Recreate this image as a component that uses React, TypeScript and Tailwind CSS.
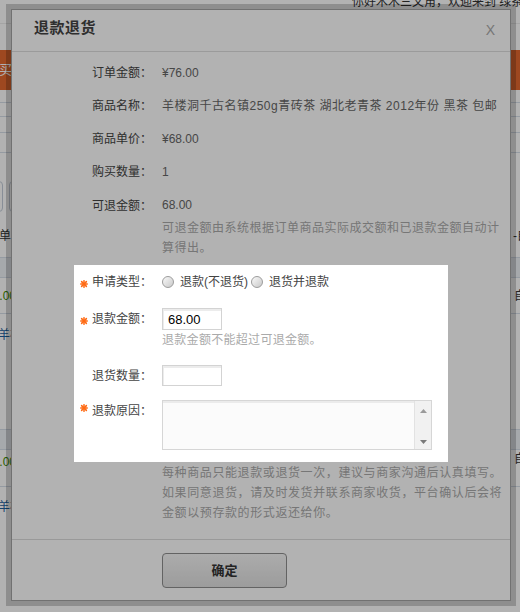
import type { ReactNode } from 'react';

// page that sits behind the dimmed dialog, only its edges show
function BackgroundPage() {
  const line = 'border-b border-[#d6dee8]';
  return (
    <div className="flex h-[612px] flex-col bg-white text-[12px] text-[#333]">
      <div className="h-[24px] border-b border-[#ececec]">
        <p className="-mt-[4px] whitespace-nowrap pl-[352px] leading-[12px]">你好木木三文角，欢迎来到 绿茶网</p>
      </div>
      <div className="h-[26px]" />
      <div className="flex h-[40px] items-center bg-[#e2672e] text-[13px] text-white">
        <span className="-ml-[1px]">买</span>
      </div>
      <div className={`h-[13px] ${line}`} />
      <div className={`h-[14px] ${line}`} />
      <div className={`h-[16px] ${line}`} />
      <div className={`h-[20px] ${line}`} />
      <div className={`flex h-[105px] flex-col ${line}`}>
        <div className="mt-[28px] flex h-[31px] gap-[6px]">
          <div className="-ml-[30px] w-[33px] rounded-[4px] border border-[#c3ccd8]" />
          <div className="w-[40px] rounded-[4px] border border-[#c3ccd8]" />
        </div>
        <div className="mt-[14px] flex leading-[20px]">
          <span className="-ml-[1px]">单阳</span>
          <span className="ml-auto w-[7px] overflow-hidden whitespace-nowrap">-自动</span>
        </div>
      </div>
      <div className={`h-[20px] bg-[#eef2f7] ${line}`} />
      <div className={`flex h-[36px] items-center ${line}`}>
        <span className="-ml-[14px] text-[#3c8c00]">76.00</span>
        <span className="ml-auto w-[6px] overflow-hidden whitespace-nowrap">自动</span>
      </div>
      <div className={`h-[116px] ${line}`}>
        <p className="mt-[11px] -ml-[2px] leading-[20px] text-[#1d5f9e]">羊楼</p>
      </div>
      <div className={`h-[20px] bg-[#eef2f7] ${line}`} />
      <div className={`flex h-[37px] items-start ${line}`}>
        <span className="mt-[3px] -ml-[14px] text-[#3c8c00]">76.00</span>
        <span className="ml-auto w-[6px] overflow-hidden whitespace-nowrap">自动</span>
      </div>
      <div>
        <p className="mt-[10px] -ml-[2px] leading-[20px] text-[#1d5f9e]">羊楼</p>
      </div>
    </div>
  );
}

function Star() {
  return (
    <svg width="8" height="8" viewBox="0 0 8 8" className="mt-[3px] shrink-0">
      <g stroke="#ff6a13" strokeWidth="1.5" strokeLinecap="round">
        <line x1="4" y1="0.7" x2="4" y2="7.3" />
        <line x1="0.7" y1="4" x2="7.3" y2="4" />
        <line x1="1.6" y1="1.6" x2="6.4" y2="6.4" />
        <line x1="6.4" y1="1.6" x2="1.6" y2="6.4" />
      </g>
    </svg>
  );
}

function Label({ text, required, top }: { text: string; required?: boolean; top?: boolean }) {
  return (
    <div className={`flex w-[78px] shrink-0 pl-[6px] ${top ? 'items-start pt-[1px]' : 'items-center'}`}>
      {required && <Star />}
      <span className="ml-auto whitespace-nowrap leading-[20px] text-[#444]">{text}</span>
    </div>
  );
}

function Row({ label, required, top, children }: { label: string; required?: boolean; top?: boolean; children: ReactNode }) {
  return (
    <div className={`flex ${top ? 'items-start' : 'items-center'}`}>
      <Label text={label} required={required} top={top} />
      <div className="ml-[10px] min-w-0 flex-1">{children}</div>
    </div>
  );
}

function Radio() {
  return (
    <span className="h-[12px] w-[12px] shrink-0 rounded-full border border-[#9c9c9c] bg-linear-to-br from-[#fafafa] to-[#c9c9c9]" />
  );
}

function RefundDialog() {
  return (
    <div className="absolute left-[6px] top-[4px] h-[602px] w-[510px] border-[5px] border-black/20">
      <div className="flex h-full flex-col border border-[#a3a3a3] bg-white">
        {/* header */}
        <div className="flex h-[42px] shrink-0 items-start justify-between border-b border-[#dedede] pl-[22px] pr-[15px] pt-[8px]">
          <h2 className="text-[15px] font-bold leading-[20px] tracking-[0.5px] text-[#444]">退款退货</h2>
          <span className="mt-[2px] text-[14px] leading-[20px] text-[#aaa]">X</span>
        </div>

        {/* body */}
        <div className="flex-1 pl-[62px] text-[12px]">
          <div className="flex flex-col gap-[13px] pt-[11px]">
            <Row label="订单金额：">
              <span className="leading-[20px] text-[#666]">¥76.00</span>
            </Row>
            <Row label="商品名称：">
              <span className="whitespace-nowrap leading-[20px] tracking-[0.5px] text-[#666]">羊楼洞千古名镇250g青砖茶 湖北老青茶 2012年份 黑茶 包邮</span>
            </Row>
            <Row label="商品单价：">
              <span className="leading-[20px] text-[#666]">¥68.00</span>
            </Row>
            <Row label="购买数量：">
              <span className="leading-[20px] text-[#666]">1</span>
            </Row>
            <Row label="可退金额：" top>
              <p className="leading-[20px] text-[#666]">68.00</p>
              <p className="mt-[3px] whitespace-nowrap leading-[20px] tracking-[0.5px] text-[#aaa]">
                可退金额由系统根据订单商品实际成交额和已退款金额自动计
                <br />
                算得出。
              </p>
            </Row>
          </div>

          {/* highlighted part, sits above the dim layer */}
          <div className="relative z-20 mt-[7px] w-[374px] bg-white pb-[12px] pt-[7px]">
            <Row label="申请类型：" required>
              <div className="flex h-[20px] items-center whitespace-nowrap text-[#444]">
                <Radio />
                <span className="ml-[6px]">退款(不退货)</span>
                <span className="ml-[3px]" />
                <Radio />
                <span className="ml-[6px]">退货并退款</span>
              </div>
            </Row>
            <div className="mt-[16px]">
              <Row label="退款金额：" required>
                <input
                  defaultValue="68.00"
                  className="h-[22px] w-[60px] border border-[#d3d3d3] bg-white px-[5px] text-[13px] text-black shadow-[inset_1px_2px_0_#ececec] outline-none"
                />
              </Row>
              <p className="ml-[88px] leading-[20px] tracking-[0.3px] text-[#aaa]">退款金额不能超过可退金额。</p>
            </div>
            <div className="mt-[15px]">
              <Row label="退货数量：">
                <input className="h-[21px] w-[60px] border border-[#d3d3d3] bg-white px-[5px] text-[13px] shadow-[inset_1px_2px_0_#ececec] outline-none" />
              </Row>
            </div>
            <div className="mt-[14px]">
              <Row label="退款原因：" required top>
                <div className="flex h-[50px] w-[270px] border border-[#d6d6d6] bg-[#fbfbfb] shadow-[inset_0_2px_0_#ebebeb]">
                  <div className="flex-1" />
                  <div className="flex w-[17px] flex-col items-center justify-between border-l border-[#e2e2e2] bg-[#f1f1f1] pb-[5px] pt-[8px]">
                    <svg width="7" height="4" viewBox="0 0 7 4">
                      <polygon points="3.5,0 7,4 0,4" fill="#9a9a9a" />
                    </svg>
                    <svg width="7" height="4" viewBox="0 0 7 4">
                      <polygon points="0,0 7,0 3.5,4" fill="#7a7a7a" />
                    </svg>
                  </div>
                </div>
              </Row>
            </div>
          </div>

          <p className="ml-[88px] whitespace-nowrap pt-[1px] leading-[20px] tracking-[0.6px] text-[#aaa]">
            每种商品只能退款或退货一次，建议与商家沟通后认真填写。
            <br />
            如果同意退货，请及时发货并联系商家收货，平台确认后会将
            <br />
            金额以预存款的形式返还给你。
          </p>
        </div>

        {/* footer */}
        <div className="shrink-0 border-t border-[#dcdcdc] pb-[12px] pl-[150px] pt-[13px]">
          <button className="h-[35px] w-[125px] rounded-[4px] border border-[#8e8e8e] bg-linear-to-b from-[#f6f6f6] to-[#e0e0e0] text-[13px] font-bold text-[#333]">
            确定
          </button>
        </div>
      </div>
    </div>
  );
}

export default function App() {
  return (
    <div className="relative h-[612px] w-[520px] overflow-hidden font-['Liberation_Sans','Noto_Sans_CJK_SC',sans-serif]">
      <BackgroundPage />
      <div className="absolute inset-0 z-10 bg-black/30" />
      <RefundDialog />
    </div>
  );
}
